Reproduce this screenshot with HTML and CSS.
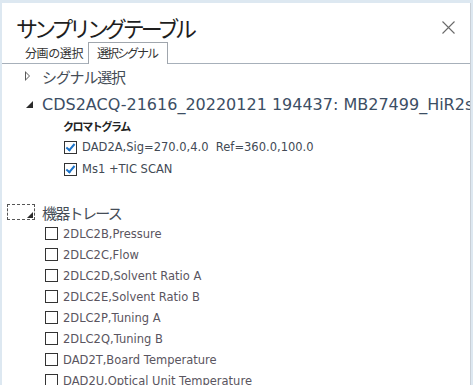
FILE: index.html
```html
<!DOCTYPE html>
<html lang="ja">
<head>
    <meta charset="UTF-8">
    <meta name="viewport" content="width=device-width, initial-scale=1.0">
    <title>サンプリングテーブル</title>
    <link rel="stylesheet" href="styles.css">
</head>
<body>
    <div class="window">
        <div class="title-bar">
            <h1>サンプリングテーブル</h1>
            <button class="close" title="閉じる">
                <svg width="13" height="13" viewBox="0 0 13 13">
                    <path d="M0.5 0.5 L12.5 12.5 M12.5 0.5 L0.5 12.5" stroke="#6a6a6a" stroke-width="1.1" fill="none"/>
                </svg>
            </button>
        </div>
        <div class="tabs">
            <span class="tab">分画の選択</span>
            <span class="tab active">選択シグナル</span>
        </div>
        <div class="tree">
            <div class="node top">
                <span class="toggle collapsed"></span>
                <span class="node-label jp">シグナル選択</span>
            </div>
            <div class="node file">
                <span class="toggle expanded"></span>
                <span class="node-label">CDS2ACQ-21616_20220121 194437: MB27499_HiR2s</span>
            </div>
            <div class="group-title">クロマトグラム</div>
            <label class="check-row signal"><input type="checkbox" checked><span>DAD2A,Sig=270.0,4.0&nbsp; Ref=360.0,100.0</span></label>
            <label class="check-row signal"><input type="checkbox" checked><span>Ms1 +TIC SCAN</span></label>

            <div class="node trace">
                <span class="focus-box"><span class="toggle expanded"></span></span>
                <span class="node-label jp kana">機器トレース</span>
            </div>
            <label class="check-row item"><input type="checkbox"><span>2DLC2B,Pressure</span></label>
            <label class="check-row item"><input type="checkbox"><span>2DLC2C,Flow</span></label>
            <label class="check-row item"><input type="checkbox"><span>2DLC2D,Solvent Ratio A</span></label>
            <label class="check-row item"><input type="checkbox"><span>2DLC2E,Solvent Ratio B</span></label>
            <label class="check-row item"><input type="checkbox"><span>2DLC2P,Tuning A</span></label>
            <label class="check-row item"><input type="checkbox"><span>2DLC2Q,Tuning B</span></label>
            <label class="check-row item"><input type="checkbox"><span>DAD2T,Board Temperature</span></label>
            <label class="check-row item"><input type="checkbox"><span>DAD2U,Optical Unit Temperature</span></label>
        </div>
    </div>
</body>
</html>
```

FILE: styles.css
```css
body {
    margin: 0;
    height: 385px;
    overflow: hidden;
    background-color: #dde8f1;
    font-family: "DejaVu Sans", "Noto Sans CJK JP", sans-serif;
    color: #3f4650;
}
.window {
    margin: 3px 2px 0 2px;
    height: 382px;
    background-color: #fff;
    border-right: 1px solid #c9cfd6;
    overflow: hidden;
}
.title-bar {
    display: flex;
    align-items: center;
    justify-content: space-between;
    height: 32px;
    padding: 8px 14px 0 14px;
}
.title-bar h1 {
    margin: 0;
    font-family: "Noto Sans CJK JP", sans-serif;
    font-weight: normal;
    font-size: 22px;
    line-height: 32px;
    letter-spacing: -4.1px;
    color: #1e1e1e;
}
.close {
    border: none;
    background: none;
    padding: 0;
    width: 13px;
    height: 13px;
    margin-right: 1px;
    cursor: pointer;
}
.tabs {
    display: flex;
    align-items: flex-end;
    height: 20px;
    padding-left: 16px;
    border-bottom: 1px solid #a7b0ba;
}
.tab {
    font-family: "Noto Sans CJK JP", sans-serif;
    font-size: 12px;
    color: #333;
    padding: 0 5px 1px 7px;
    line-height: 18px;
    letter-spacing: -0.4px;
    white-space: nowrap;
}
.tab.active {
    border: 1px solid #a0a6ad;
    border-bottom: none;
    background-color: #fff;
    margin-bottom: -1px;
    padding: 1px 10px 2px 8px;
    letter-spacing: -2px;
}
.node {
    display: flex;
    align-items: center;
    height: 24px;
}
.node-label {
    font-size: 16px;
    white-space: nowrap;
    color: #454d57;
}
.node-label.jp {
    font-family: "Noto Sans CJK JP", sans-serif;
    font-size: 15px;
    letter-spacing: -1.2px;
}
.node-label.kana {
    letter-spacing: -1.7px;
}
.node.top {
    padding-left: 22px;
}
.node.file {
    margin-top: 4px;
    padding-left: 22px;
}
.node.file .node-label {
    color: #3c4e64;
}
.toggle {
    display: inline-block;
    flex: none;
    width: 10px;
    height: 10px;
    margin-right: 8px;
    position: relative;
}
.toggle.collapsed::before {
    content: "";
    position: absolute;
    left: 1px;
    top: 0;
    border-left: 5px solid #5a5a5a;
    border-top: 5px solid transparent;
    border-bottom: 5px solid transparent;
}
.toggle.collapsed::after {
    content: "";
    position: absolute;
    left: 2px;
    top: 2px;
    border-left: 3px solid #fff;
    border-top: 3px solid transparent;
    border-bottom: 3px solid transparent;
}
.toggle.expanded::before {
    content: "";
    position: absolute;
    right: 1px;
    bottom: 1px;
    border-right: 7px solid #2b2b2b;
    border-top: 7px solid transparent;
}
.group-title {
    font-family: "Noto Sans CJK JP", sans-serif;
    font-weight: bold;
    font-size: 11px;
    letter-spacing: -1.4px;
    color: #222;
    padding-left: 61px;
    height: 20px;
    line-height: 20px;
}
.check-row {
    display: flex;
    align-items: center;
    font-size: 11.5px;
    white-space: nowrap;
}
.check-row input {
    appearance: none;
    -webkit-appearance: none;
    width: 13px;
    height: 13px;
    margin: 0 5px 0 0;
    border: 1px solid #333;
    background: #fff;
    position: relative;
    flex: none;
}
.check-row input:checked::after {
    content: "";
    position: absolute;
    left: 3px;
    top: 0px;
    width: 3px;
    height: 7px;
    border-right: 2px solid #1a72c9;
    border-bottom: 2px solid #1a72c9;
    transform: rotate(40deg);
}
.check-row.signal {
    height: 22px;
    padding-left: 62px;
    color: #424a55;
}
.check-row.item {
    height: 21px;
    padding-left: 43px;
    color: #5a5560;
}
.node.trace {
    margin-top: 21px;
    height: 22px;
    padding-left: 5px;
}
.focus-box {
    display: flex;
    justify-content: flex-end;
    align-items: flex-end;
    width: 26px;
    height: 13px;
    border: 1px dashed #555;
    margin-right: 7px;
    padding-bottom: 1px;
}
.focus-box .toggle {
    margin-right: 1px;
    width: 8px;
    height: 8px;
}
.focus-box .toggle.expanded::before {
    right: 0;
    bottom: 0;
    border-right-width: 6px;
    border-top-width: 6px;
}
```
